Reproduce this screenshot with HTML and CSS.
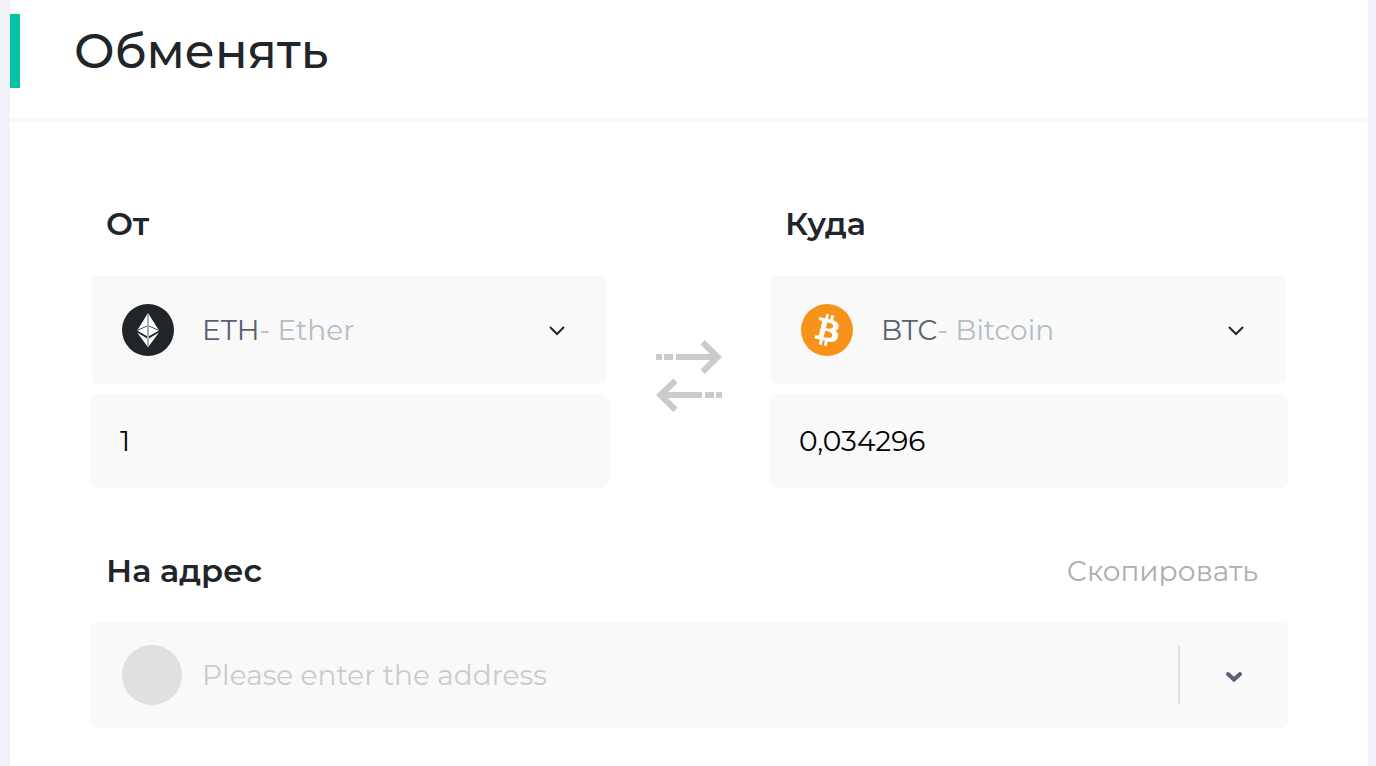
FILE: index.html
```html
<!DOCTYPE html>
<html lang="ru">
<head>
<meta charset="utf-8">
<meta name="viewport" content="width=device-width, initial-scale=1">
<title>Обменять</title>
<link rel="stylesheet" href="styles.css">
</head>
<body>
<main class="card">
  <header class="card-header">
    <h1 class="title">Обменять</h1>
  </header>
  <form class="exchange">
    <div class="pair">
      <section class="side">
        <label class="label" for="from-amount">От</label>
        <button class="coin-select" type="button" aria-haspopup="listbox">
          <svg class="coin" viewBox="0 0 52 52" aria-hidden="true">
            <circle cx="26" cy="26" r="26" fill="#212529"/>
            <path fill="#fff" d="M26 9 37 26.6 26 32.8 15.2 26.6z"/>
            <path fill="#fff" d="M15.2 28.6 26 35 37 28.6 26 43.2z"/>
            <path fill="none" stroke="#4a5056" d="M15.5 26.3 26 21.6 36.7 26.3"/>
            <path stroke="#a9afb6" stroke-width="2" d="M26 10V42"/>
          </svg>
          <span class="coin-name">ETH<span class="coin-full">- Ether</span></span>
          <svg class="chevron" viewBox="0 0 16 16" aria-hidden="true"><path d="M1 5 8 12 15 5"/></svg>
        </button>
        <input class="amount" id="from-amount" type="text" inputmode="decimal" value="1">
      </section>
      <button class="swap" type="button" aria-label="Поменять местами">
        <svg class="swap-icon" viewBox="0 0 66 72" aria-hidden="true">
          <path d="M0 14h6v6H0zM8 14h9v6H8zM20 14h34L44.500 4.500 48.700 0 66 17 48.700 34 44.500 29.500 54 20H20z"/>
          <path d="M66 52h-6v6h6zM58 52h-9v6h9zM46 52H12L21.500 43 17.300 38.500 0 55 17.300 72 21.500 67.500 12 58h34z"/>
        </svg>
      </button>
      <section class="side">
        <label class="label" for="to-amount">Куда</label>
        <button class="coin-select" type="button" aria-haspopup="listbox">
          <svg class="coin" viewBox="0 0 32 32" aria-hidden="true">
            <circle cx="16" cy="16" r="16" fill="#f7931a"/>
            <path fill="#fff" d="M23.189 14.020c.314-2.096-1.283-3.223-3.465-3.975l.708-2.840-1.728-.430-.690 2.765c-.454-.114-.920-.220-1.385-.326l.695-2.783L15.596 6l-.708 2.839c-.376-.086-.746-.170-1.104-.260l.002-.009-2.384-.595-.460 1.846s1.283.294 1.256.312c.700.175.826.638.805 1.006l-.806 3.235c.048.012.110.030.180.057l-.183-.045-1.130 4.532c-.086.212-.303.531-.793.410.018.025-1.256-.313-1.256-.313l-.858 1.978 2.250.561c.418.105.828.215 1.231.318l-.715 2.872 1.727.430.708-2.840c.472.127.930.245 1.378.357l-.706 2.828 1.728.430.715-2.866c2.948.558 5.164.333 6.097-2.333.752-2.146-.037-3.385-1.588-4.192 1.130-.260 1.980-1.003 2.207-2.538zm-3.950 5.538c-.533 2.147-4.148.986-5.320.695l.950-3.805c1.172.293 4.929.872 4.370 3.110zm.535-5.569c-.487 1.953-3.495.960-4.470.717l.860-3.450c.975.243 4.118.696 3.610 2.733z"/>
          </svg>
          <span class="coin-name">BTC<span class="coin-full">- Bitcoin</span></span>
          <svg class="chevron" viewBox="0 0 16 16" aria-hidden="true"><path d="M1 5 8 12 15 5"/></svg>
        </button>
        <input class="amount" id="to-amount" type="text" inputmode="decimal" value="0,034296">
      </section>
    </div>
    <section class="address">
      <div class="address-head">
        <label class="label" for="address">На адрес</label>
        <button class="copy" type="button">Скопировать</button>
      </div>
      <div class="address-box">
        <span class="avatar"></span>
        <input class="address-input" id="address" type="text" placeholder="Please enter the address">
        <button class="address-more" type="button" aria-label="Выбрать адрес">
          <svg class="chevron chevron-bold" viewBox="0 0 16 16" aria-hidden="true"><path d="M2 7 8 12.500 14 7"/></svg>
        </button>
      </div>
    </section>
  </form>
</main>
</body>
</html>
```
FILE: styles.css
```css
* {
  box-sizing: border-box;
}

body {
  margin: 0;
  background: #f2f3f9;
  color: #212529;
  font-family: Montserrat, Inter, "Noto Sans", sans-serif;
  font-size: 28px;
}

button,
input {
  margin: 0;
  padding: 0;
  border: 0;
  background: none;
  font: inherit;
  text-align: left;
}

button {
  cursor: pointer;
}

.card {
  min-height: 100vh;
  margin: 0 8px 0 10px;
  background: #fff;
}

.card-header {
  padding: 14px 0 30px;
  border-bottom: 4px solid #f9f9f9;
}

.title {
  margin: 0;
  padding-left: 54px;
  border-left: 10px solid #05c1a6;
  font-size: 48px;
  font-weight: 500;
  line-height: 74px;
}

.exchange {
  display: flex;
  flex-direction: column;
  gap: 63px;
  padding: 82px 80px 38px;
}

.pair {
  display: grid;
  grid-template-columns: 1fr 160px 1fr;
}

.side {
  display: flex;
  flex-direction: column;
  gap: 10px;
  min-width: 0;
}

.label {
  padding-left: 16px;
  font-size: 32px;
  font-weight: 600;
  line-height: 40px;
}

.side .label {
  margin-bottom: 22px;
}

.coin-select {
  display: flex;
  align-items: center;
  height: 108px;
  margin: 0 2px;
  padding: 0 42px 0 30px;
  border-radius: 6px;
  background: #f9f9f9;
}

.coin {
  flex: none;
  width: 52px;
  height: 52px;
  margin-right: 28px;
}

.coin-name {
  flex: 1;
  color: #566273;
}

.coin-full {
  color: #b5bec6;
}

.chevron {
  flex: none;
  display: block;
  width: 16px;
  height: 16px;
  fill: none;
  stroke: #212529;
  stroke-width: 2;
}

.chevron-bold {
  stroke: #566273;
  stroke-width: 4;
  stroke-linecap: round;
}

.amount {
  width: 100%;
  height: 94px;
  padding: 0 30px;
  border-radius: 8px;
  background: #f9f9f9;
  color: #000;
}

.swap {
  display: flex;
  align-items: center;
  justify-content: center;
  padding-top: 60px;
}

.swap-icon {
  width: 66px;
  height: 72px;
  fill: #cbcbcb;
}

.address {
  display: flex;
  flex-direction: column;
  gap: 31px;
}

.address-head {
  display: flex;
  align-items: center;
  justify-content: space-between;
  padding-right: 30px;
}

.copy {
  color: #adadad;
  line-height: 40px;
}

.address-box {
  display: flex;
  align-items: center;
  height: 106px;
  padding-left: 32px;
  border-radius: 8px;
  background: #f9f9f9;
}

.avatar {
  flex: none;
  width: 60px;
  height: 60px;
  margin-right: 20px;
  border-radius: 50%;
  background: #e0e0e0;
}

.address-input {
  flex: 1;
  min-width: 0;
  height: 60px;
}

.address-input::placeholder {
  color: #cbcbcb;
  opacity: 1;
}

.address-more {
  display: flex;
  align-items: center;
  justify-content: center;
  width: 110px;
  height: 58px;
  border-left: 2px solid #e0e0e0;
}
```
